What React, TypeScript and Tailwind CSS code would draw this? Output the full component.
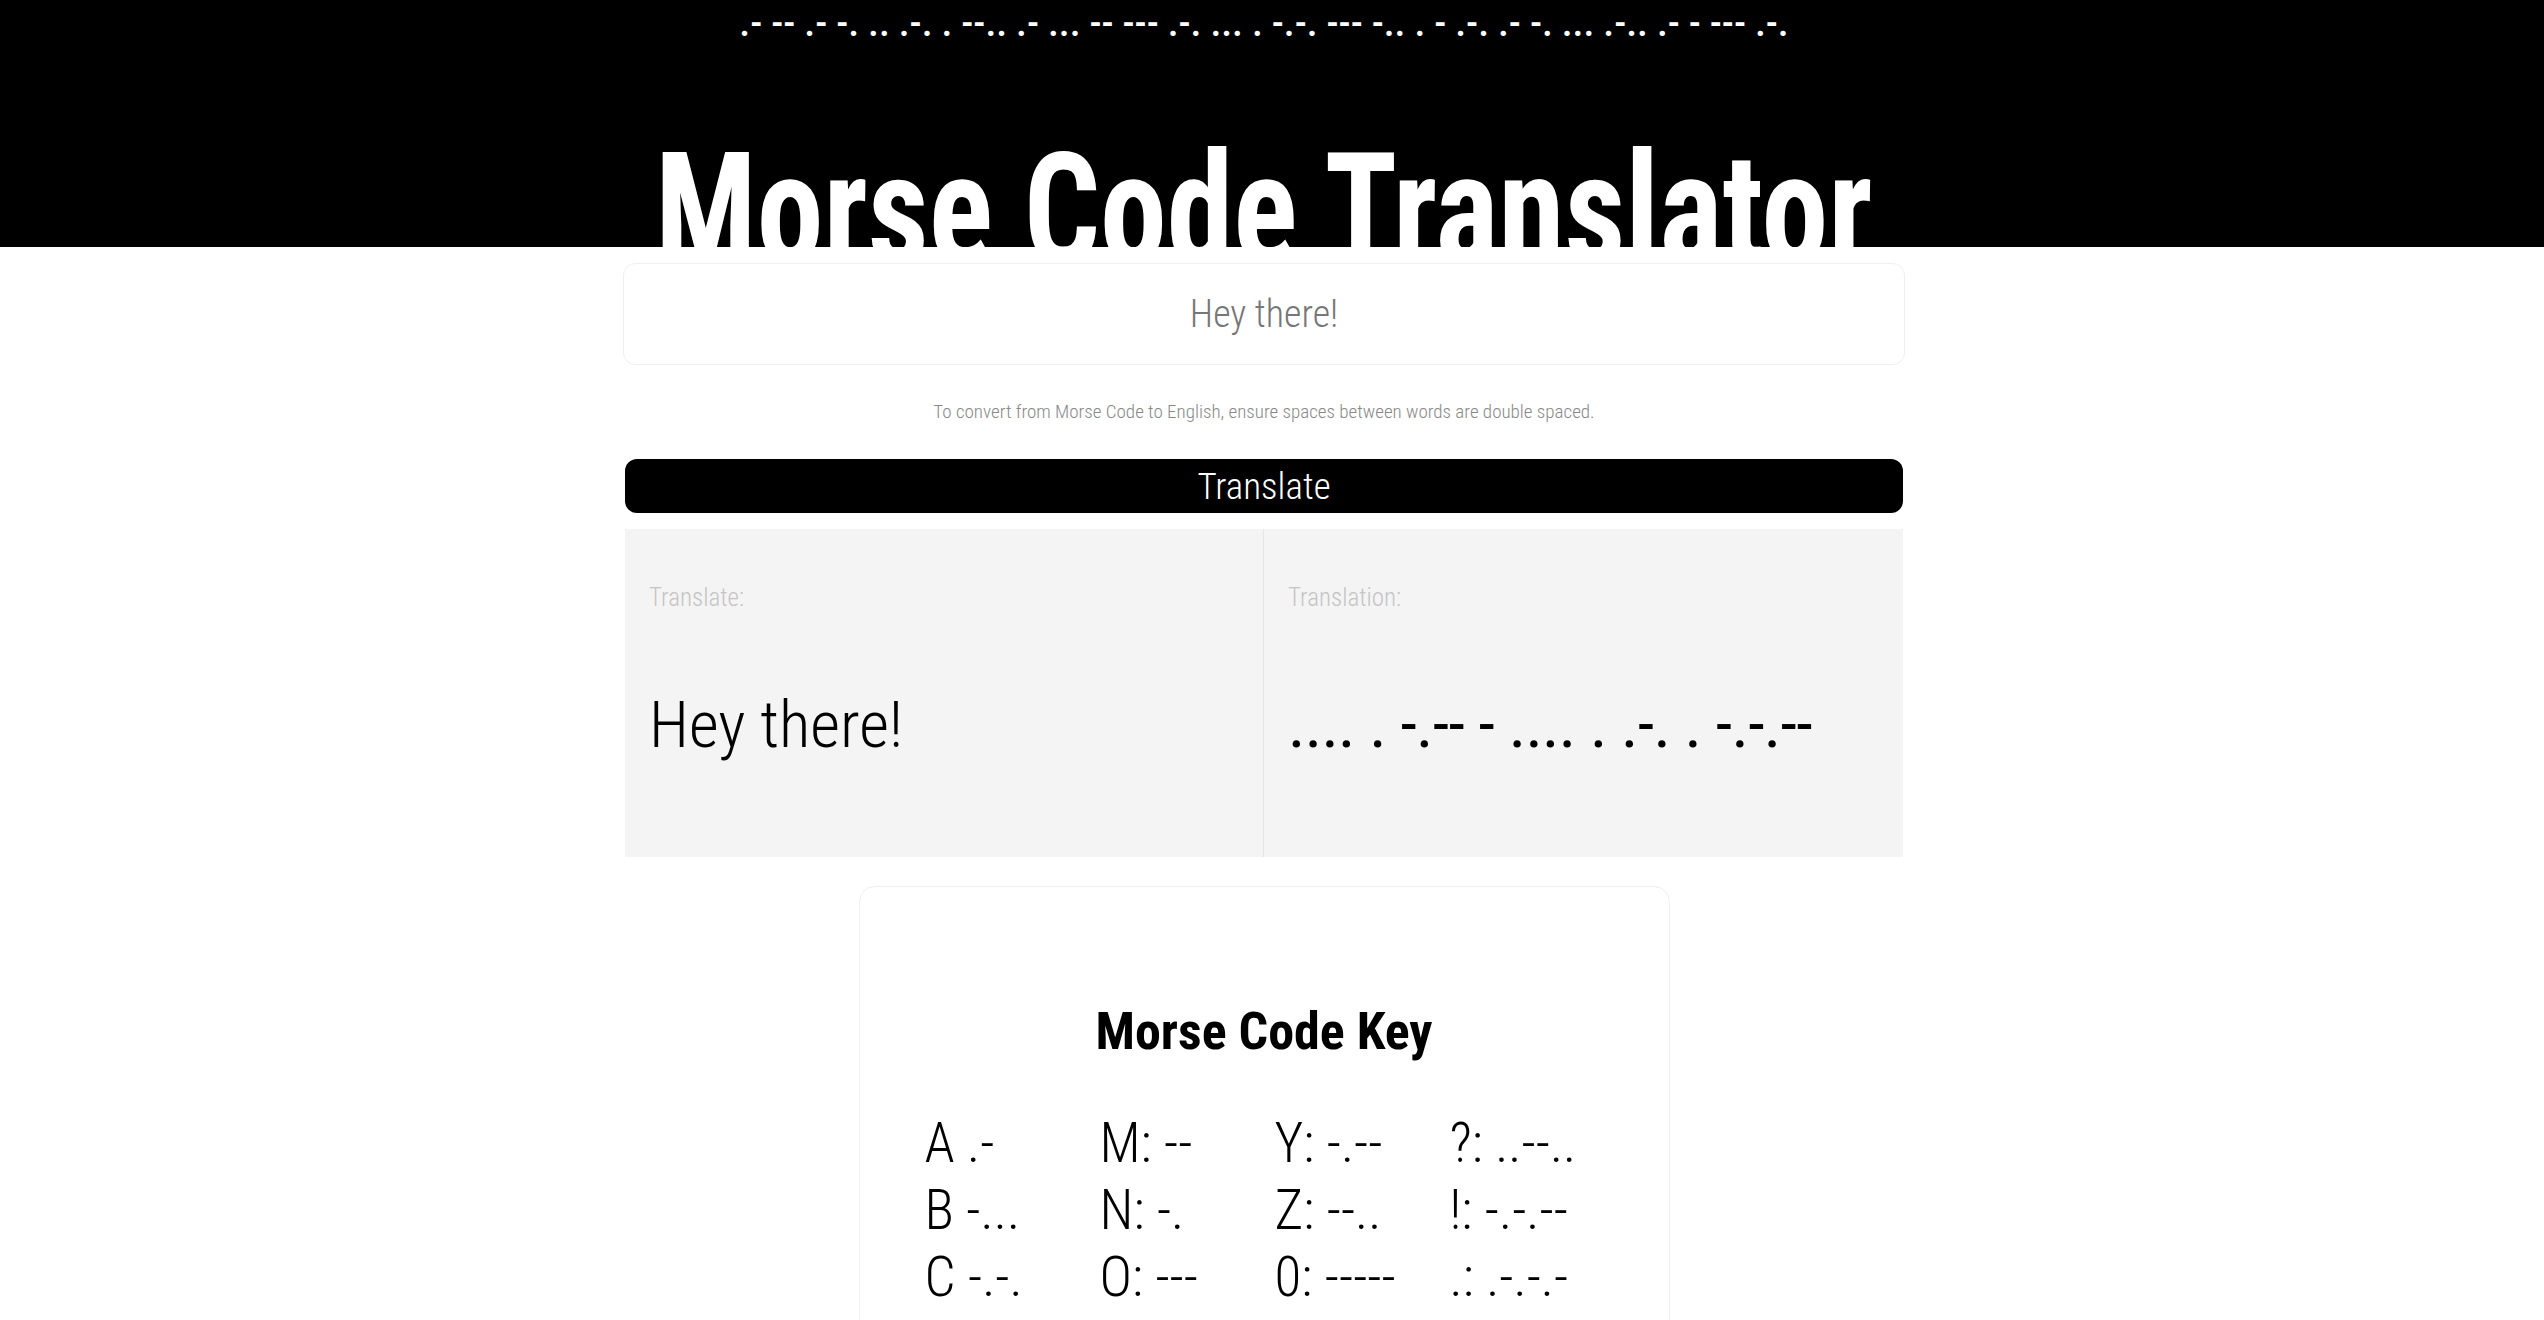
import React from 'react';

const MORSE: Record<string, string> = {
  A: '.-', B: '-...', C: '-.-.', D: '-..', E: '.', F: '..-.', G: '--.', H: '....', I: '..', J: '.---',
  K: '-.-', L: '.-..', M: '--', N: '-.', O: '---', P: '.--.', Q: '--.-', R: '.-.', S: '...', T: '-',
  U: '..-', V: '...-', W: '.--', X: '-..-', Y: '-.--', Z: '--..',
  '0': '-----', '1': '.----', '2': '..---', '3': '...--', '4': '....-', '5': '.....',
  '6': '-....', '7': '--...', '8': '---..', '9': '----.',
  '?': '..--..', '!': '-.-.--', '.': '.-.-.-', ',': '--..--', ';': '-.-.-.', ':': '---...',
  '+': '.-.-.', '-': '-....-', '/': '-..-.', '=': '-...-', "'": '.----.', '@': '.--.-.',
};

const toMorse = (text: string) =>
  text
    .toUpperCase()
    .split(' ')
    .map((word) =>
      word
        .split('')
        .map((ch) => MORSE[ch] ?? '')
        .join(' ')
    )
    .join('  ');

// key columns, read top to bottom
const keyColumns: string[][] = [
  ['A', 'B', 'C', 'D', 'E', 'F', 'G', 'H', 'I', 'J', 'K', 'L'].map((l, i) =>
    i < 3 ? `${l} ${MORSE[l]}` : `${l}: ${MORSE[l]}`
  ),
  ['M', 'N', 'O', 'P', 'Q', 'R', 'S', 'T', 'U', 'V', 'W', 'X'].map((l) => `${l}: ${MORSE[l]}`),
  ['Y', 'Z', '0', '1', '2', '3', '4', '5', '6', '7', '8', '9'].map((l) => `${l}: ${MORSE[l]}`),
  ['?', '!', '.', ',', ';', ':', '+', '-', '/', '=', "'", '@'].map((l) => `${l}: ${MORSE[l]}`),
];

export default function App() {
  const [input, setInput] = React.useState('Hey there!');
  const [source, setSource] = React.useState('Hey there!');

  const translation = toMorse(source);

  return (
    <div className="min-h-screen bg-white font-['Roboto',sans-serif] [font-stretch:condensed] text-black">
      {/* header */}
      <header className="h-[247px] bg-black overflow-hidden flex flex-col items-center pt-[3px] pr-[16px]">
        <p className="text-white text-[39px] leading-[40px] font-medium">
          {toMorse('Amani Rezas Morse Code Translator')}
        </p>
        <h1 className="mt-[90px] text-white font-bold text-[155px] leading-none whitespace-nowrap scale-x-[0.865]">
          Morse Code Translator
        </h1>
      </header>

      <main className="w-[2528px] flex flex-col items-center pt-[16px] pb-[40px]">
        <input
          value={input}
          onChange={(e) => setInput(e.target.value)}
          className="w-[1282px] h-[102px] border border-[#efefef] rounded-[12px] text-center text-[38px] font-light text-[#777] outline-none [font-stretch:condensed]"
        />

        <p className="mt-[35px] text-[19px] leading-[24px] font-light text-[#888]">
          To convert from Morse Code to English, ensure spaces between words are double spaced.
        </p>

        <button
          onClick={() => setSource(input)}
          className="mt-[35px] w-[1278px] h-[54px] rounded-[12px] bg-black text-white text-[37px] leading-none font-light [font-stretch:condensed]"
        >
          Translate
        </button>

        <section className="mt-[16px] w-[1278px] h-[328px] bg-[#f4f4f4] grid grid-cols-2">
          <div className="border-r border-[#e6e6e6] px-[24px] pt-[53px]">
            <div className="text-[25px] leading-[32px] font-light text-[#c4c4c4]">Translate:</div>
            <div className="mt-[71px] text-[65px] leading-[80px] font-light whitespace-pre">{source}</div>
          </div>
          <div className="px-[24px] pt-[53px]">
            <div className="text-[25px] leading-[32px] font-light text-[#c4c4c4]">Translation:</div>
            <div className="mt-[71px] text-[66px] leading-[80px] font-normal tracking-[-0.7px]">{translation}</div>
          </div>
        </section>

        <section className="mt-[29px] w-[811px] border border-[#efefef] rounded-[16px] pt-[115px] pb-[60px]">
          <h2 className="text-center text-[52px] leading-[60px] font-bold">Morse Code Key</h2>
          <div className="mt-[48px] pl-[65px] grid grid-cols-[175px_175px_175px_175px]">
            {keyColumns.map((col, ci) => (
              <div key={ci} className="flex flex-col">
                {col.map((entry) => (
                  <span key={entry} className="text-[55px] leading-[67px] font-light whitespace-pre">
                    {entry}
                  </span>
                ))}
              </div>
            ))}
          </div>
        </section>
      </main>
    </div>
  );
}
